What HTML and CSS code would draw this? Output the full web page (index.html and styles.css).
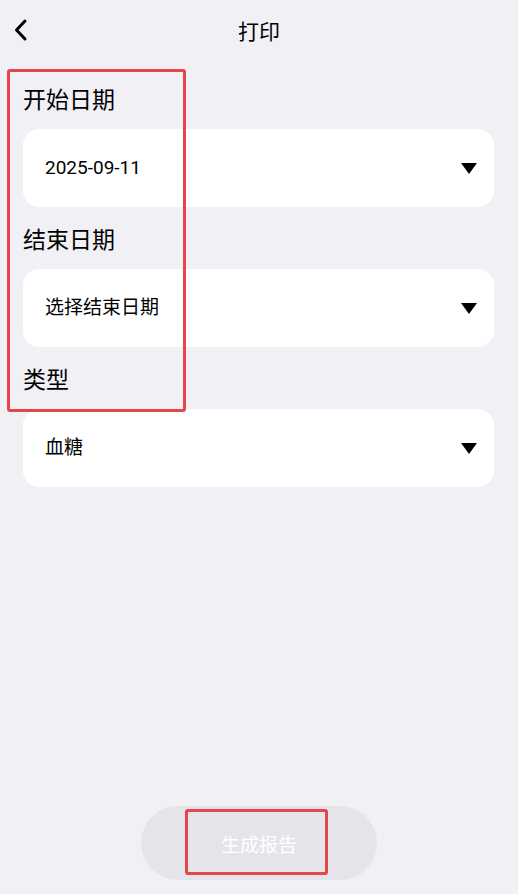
FILE: index.html
```html
<!DOCTYPE html>
<html lang="zh-CN">
<head>
<meta charset="utf-8">
<title>打印</title>
<link rel="stylesheet" href="styles.css">
</head>
<body>
<div class="page">
  <header class="topbar">
    <button class="back" aria-label="返回">
      <svg width="16" height="24" viewBox="0 0 16 24"><path d="M12 3 L3.5 12 L12 21" fill="none" stroke="#000" stroke-width="3" stroke-linecap="round" stroke-linejoin="round"/></svg>
    </button>
    <h1 class="title">打印</h1>
  </header>

  <main class="form">
    <div class="field">
      <div class="label">开始日期</div>
      <div class="select"><span class="value">2025-09-11</span><span class="caret"></span></div>
    </div>
    <div class="field">
      <div class="label">结束日期</div>
      <div class="select"><span class="value">选择结束日期</span><span class="caret"></span></div>
    </div>
    <div class="field">
      <div class="label">类型</div>
      <div class="select"><span class="value">血糖</span><span class="caret"></span></div>
    </div>
    <div class="mark mark-fields"></div>
  </main>

  <footer class="actions">
    <button class="generate">生成报告</button>
    <div class="mark mark-button"></div>
  </footer>
</div>
</body>
</html>
```
FILE: styles.css
```css
* { box-sizing: border-box; }
html, body { margin: 0; padding: 0; }
body {
  background: #f1f0f5;
  font-family: Roboto, "Noto Sans CJK SC", sans-serif;
  color: #000;
}
.page {
  height: 894px;
  display: flex;
  flex-direction: column;
  position: relative;
}
.topbar {
  height: 60px;
  display: flex;
  align-items: center;
  justify-content: center;
  position: relative;
}
.back {
  position: absolute;
  left: 13px;
  top: 18px;
  width: 16px;
  height: 24px;
  padding: 0;
  border: 0;
  background: none;
  display: flex;
}
.title {
  margin: 0;
  font-size: 21px;
  font-weight: 400;
  font-family: "Noto Sans CJK SC", sans-serif;
  line-height: 30px;
}
.form {
  padding: 23px 24px 0 23px;
  position: relative;
}
.field + .field { margin-top: 16px; }
.label {
  font-family: "Noto Sans CJK SC", sans-serif;
  font-size: 23px;
  line-height: 30px;
  height: 30px;
  margin-bottom: 16px;
}
.select {
  height: 78px;
  background: #fff;
  border-radius: 16px;
  display: flex;
  align-items: center;
  justify-content: space-between;
  padding: 0 17px 0 22px;
}
.value {
  font-size: 19px;
  line-height: 24px;
}
.caret {
  width: 0;
  height: 0;
  border-left: 8.5px solid transparent;
  border-right: 8.5px solid transparent;
  border-top: 11px solid #000;
}
.actions {
  margin-top: auto;
  padding-bottom: 14px;
  display: flex;
  justify-content: center;
  position: relative;
}
.generate {
  width: 236px;
  height: 74px;
  border: 0;
  border-radius: 37px;
  background: #e4e4e9;
  color: #fff;
  font-family: "Noto Sans CJK SC", sans-serif;
  font-size: 19px;
}
.mark {
  position: absolute;
  border: 3.5px solid #e8454a;
  border-radius: 3px;
  pointer-events: none;
}
.mark-fields {
  left: 7px;
  top: 9px;
  width: 179px;
  height: 343px;
}
.mark-button {
  left: 185px;
  top: 3px;
  width: 143px;
  height: 66px;
}
```
